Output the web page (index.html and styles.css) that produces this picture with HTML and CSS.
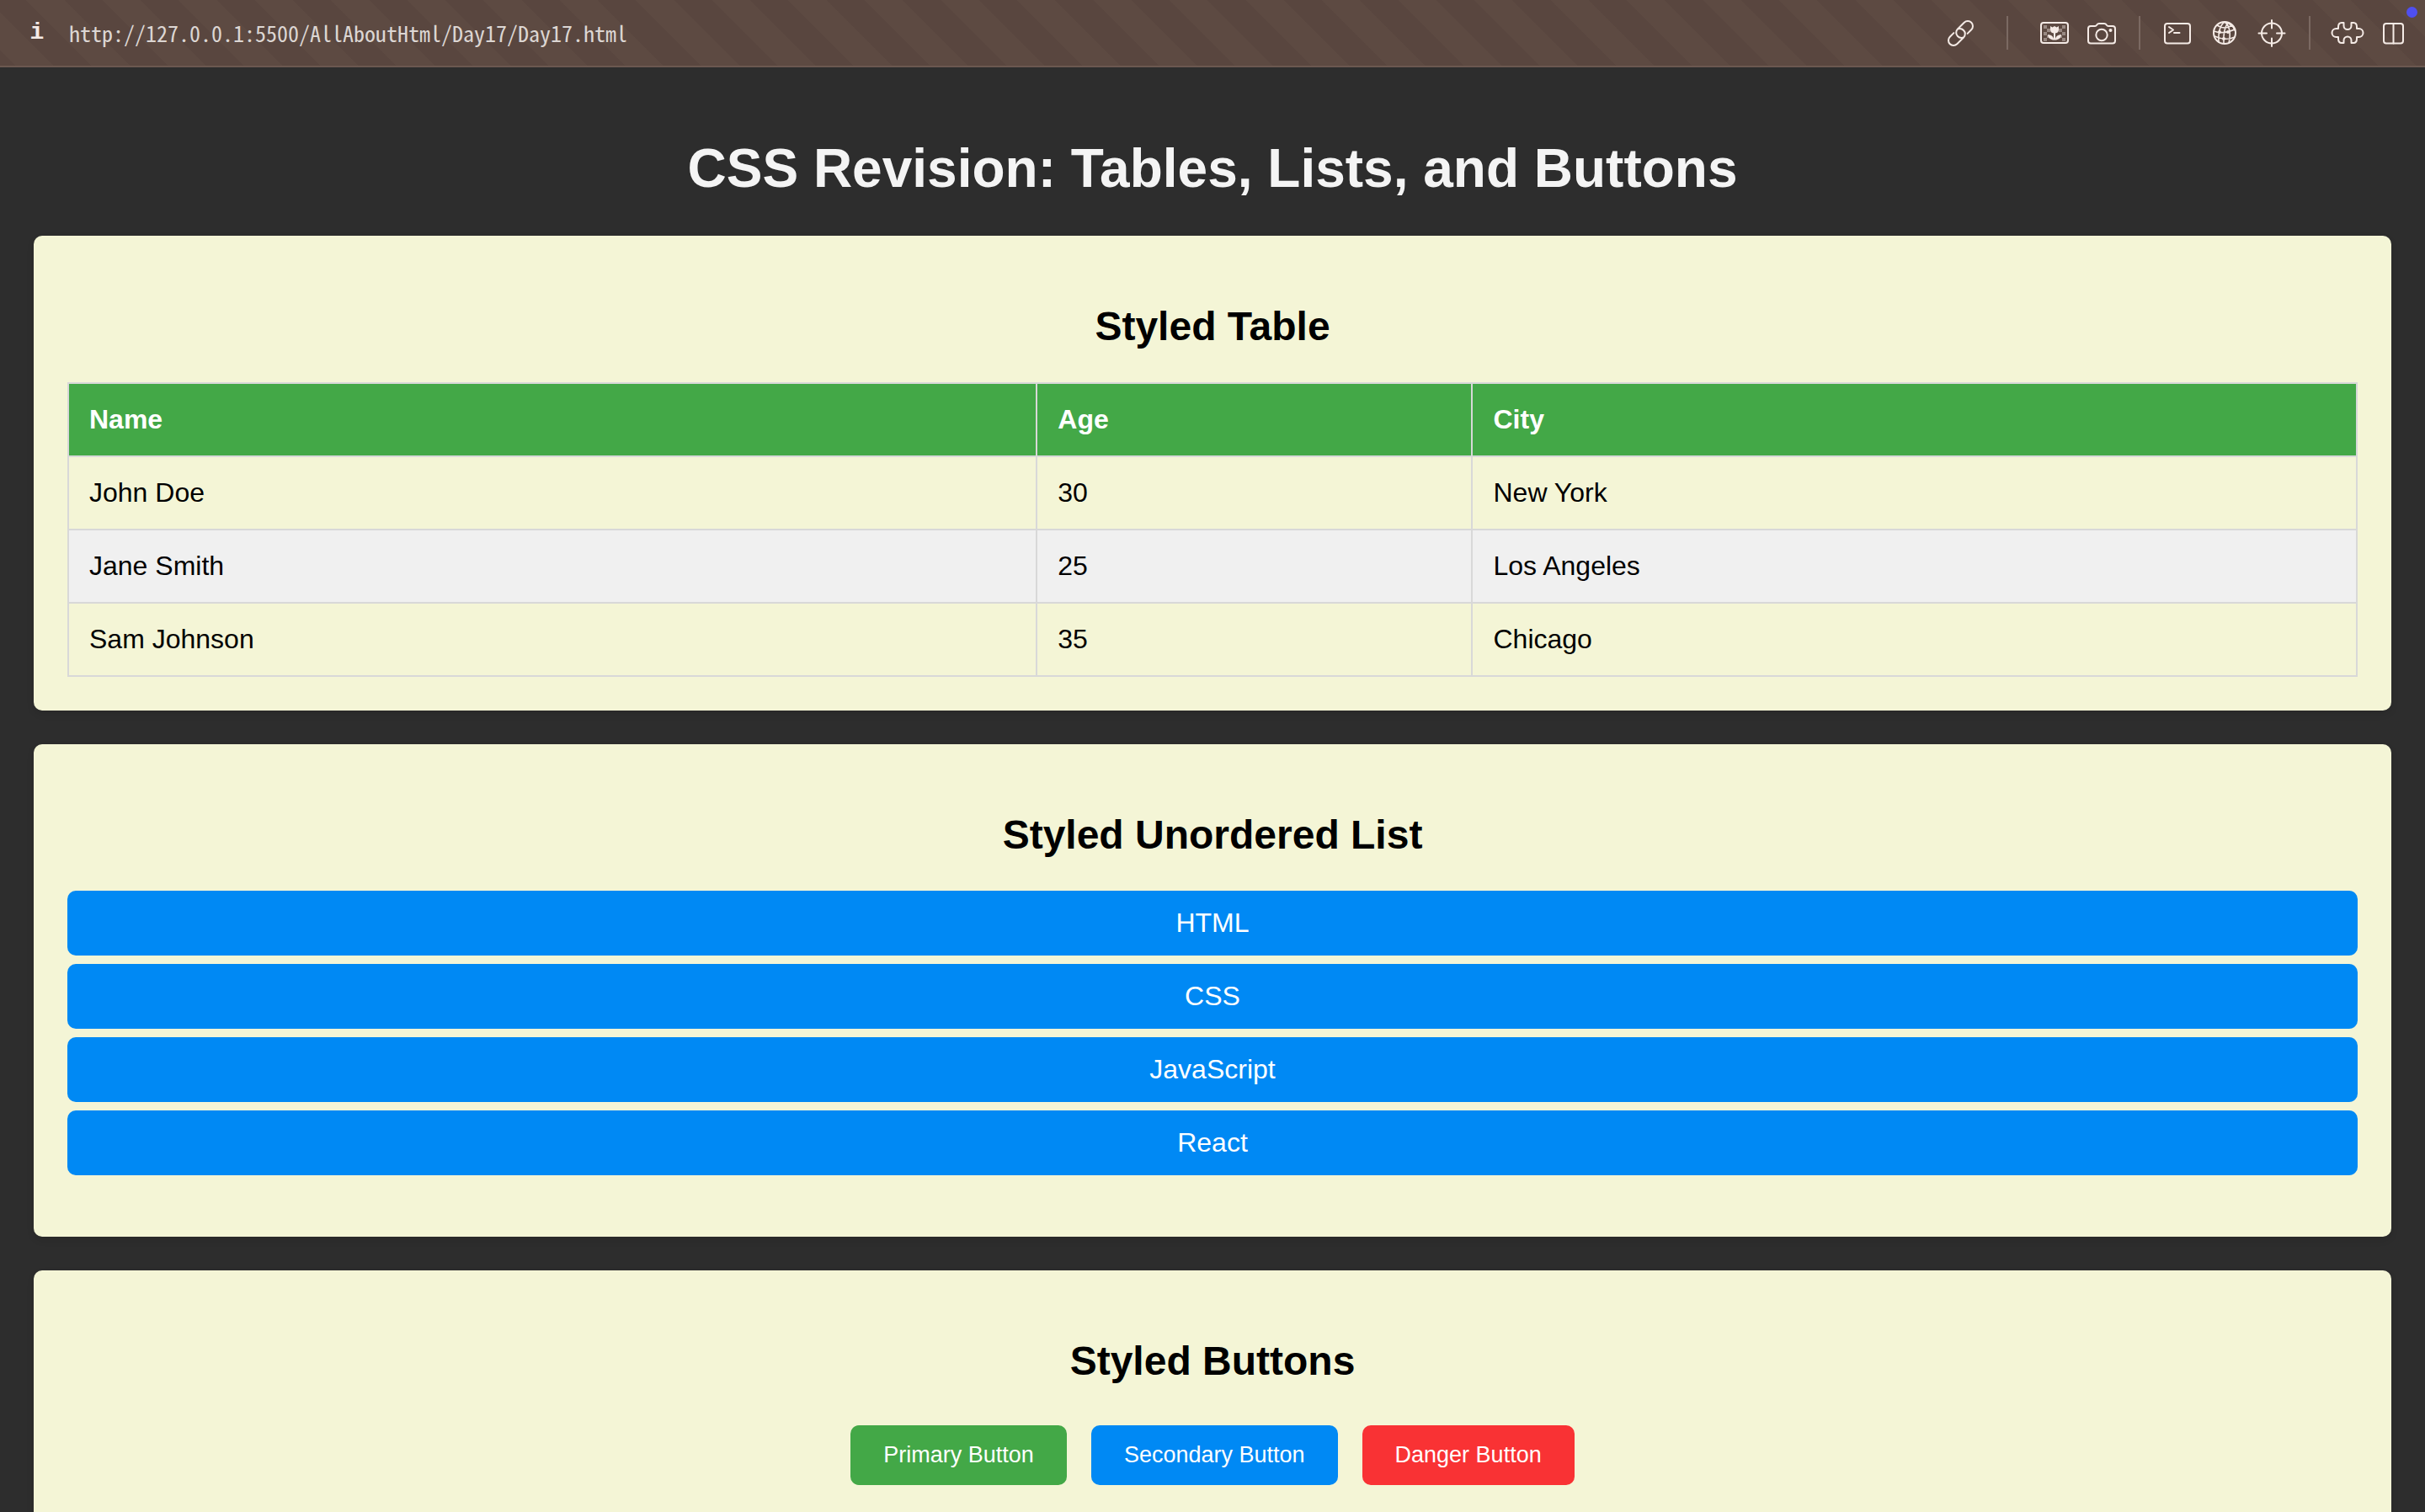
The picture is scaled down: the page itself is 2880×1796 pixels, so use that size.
FILE: index.html
```html
<!DOCTYPE html>
<html lang="en">
<head>
<meta charset="utf-8">
<title>CSS Revision</title>
<link rel="stylesheet" href="styles.css">
</head>
<body>
<header class="toolbar">
  <button class="info" type="button" aria-label="Site information">i</button>
  <input class="address" type="text" aria-label="Address" value="http://127.0.0.1:5500/AllAboutHtml/Day17/Day17.html">
  <button class="tool" type="button" aria-label="Copy link">
    <svg viewBox="0 0 40 40"><g transform="translate(20.500 20.500) rotate(-45)"><path d="M5.500 6H12a6 6 0 0 0 0-12H1a6 6 0 0 0-6 6q0 3.500 3 5.500"/><path d="M-5.500-6H-12a6 6 0 0 0 0 12H-1a6 6 0 0 0 6-6q0-3.500-3-5.500"/></g></svg>
  </button>
  <span class="divider wide"></span>
  <button class="tool" type="button" aria-label="Images">
    <svg viewBox="0 0 40 40"><rect x="4" y="8" width="32" height="24" rx="3"/><g class="solid"><path opacity=".4" d="M7 11h4v4h-4zM11 15h4v4h-4zM7 19h4v4h-4zM7 26h4v4h-4zM11 23h3v3h-3zM29 11h4v4h-4zM25 15h4v4h-4zM29 19h4v4h-4zM29 26h4v4h-4zM26 23h3v3h-3z"/><path d="M15 12l2.500 1.500L20 12l2.500 1.500L25 12v4q0 4-4 4.500V27q1-4.500 7-5 0 5-6 6.500h-4Q12 27 12 22q6 .5 7 5v-6.500q-4-.5-4-4.500z"/></g></svg>
  </button>
  <button class="tool" type="button" aria-label="Capture">
    <svg viewBox="0 0 40 40"><path d="M4 15q0-3 3-3h4.500q1.500 0 2.500-1.200 1.300-1.800 3-1.800h6q1.700 0 3 1.800 1 1.200 2.500 1.200H33q3 0 3 3v14.500q0 3-3 3H7q-3 0-3-3z"/><circle cx="20" cy="22.500" r="6.700"/><circle class="solid" cx="30.500" cy="17" r="2"/></svg>
  </button>
  <span class="divider"></span>
  <button class="tool" type="button" aria-label="Console">
    <svg viewBox="0 0 40 40"><rect x="5" y="9" width="30" height="23.500" rx="3"/><path d="M10 13l5 3.500-5 3.500M16 20h6.500"/></svg>
  </button>
  <button class="tool" type="button" aria-label="Network">
    <svg viewBox="0 0 40 40"><circle cx="20" cy="20" r="13"/><path stroke-width="1.600" d="M20 7q-8 6-7 24M24 8q-6 8-5 24M20 7q9 7 5 25M20 7q10 3 12 10M11 11q9 6 18 0M7 18q12 4 25-2M8 24q13 6 24 1"/><g class="solid"><circle cx="14" cy="19" r="2"/><circle cx="24" cy="19" r="2"/><circle cx="19" cy="27" r="2"/></g></svg>
  </button>
  <button class="tool" type="button" aria-label="Inspect">
    <svg viewBox="0 0 40 40"><circle cx="20" cy="20.500" r="12"/><path d="M20 5v9.500M20 26.500v9.500M4.500 20.500h9.500M26 20.500h9.500"/></svg>
  </button>
  <span class="divider"></span>
  <button class="tool" type="button" aria-label="Extensions">
    <svg viewBox="0 0 40 40"><path d="M9 15v-2q0-5 4-5h2.500v3.500a4.500 4.500 0 0 0 9 0V8H27q4 0 4 5v2h2.500a4.500 4.500 0 0 1 0 10H31v2q0 5-4 5h-2.500v-3a4.500 4.500 0 0 0-9 0v3H13q-4 0-4-5v-2H6.500a4.500 4.500 0 0 1 0-10z"/></svg>
  </button>
  <button class="tool" type="button" aria-label="Split view">
    <svg viewBox="0 0 40 40"><rect x="7" y="9" width="23" height="23.500" rx="3"/><path d="M18.500 9v23.500"/></svg>
    <span class="dot"></span>
  </button>
</header>
<main class="page">
  <h1>CSS Revision: Tables, Lists, and Buttons</h1>
  <section class="card">
    <h2>Styled Table</h2>
    <table>
      <thead>
        <tr><th>Name</th><th>Age</th><th>City</th></tr>
      </thead>
      <tbody>
        <tr><td>John Doe</td><td>30</td><td>New York</td></tr>
        <tr><td>Jane Smith</td><td>25</td><td>Los Angeles</td></tr>
        <tr><td>Sam Johnson</td><td>35</td><td>Chicago</td></tr>
      </tbody>
    </table>
  </section>
  <section class="card">
    <h2>Styled Unordered List</h2>
    <ul>
      <li>HTML</li>
      <li>CSS</li>
      <li>JavaScript</li>
      <li>React</li>
    </ul>
  </section>
  <section class="card">
    <h2>Styled Buttons</h2>
    <div class="buttons">
      <button class="btn primary" type="button">Primary Button</button>
      <button class="btn secondary" type="button">Secondary Button</button>
      <button class="btn danger" type="button">Danger Button</button>
    </div>
  </section>
</main>
</body>
</html>
```

FILE: styles.css
```css
* {
  box-sizing: border-box;
}

body {
  margin: 0;
  height: 100vh;
  display: flex;
  flex-direction: column;
  background: #2d2d2d;
  font-family: "Liberation Sans", Arial, sans-serif;
  font-size: 32px;
  line-height: 37px;
}

/* Browser toolbar */
.toolbar {
  flex: none;
  height: 80px;
  display: flex;
  align-items: center;
  gap: 16px;
  padding: 0 16px 0 24px;
  border-bottom: 2px solid #6b5850;
  background: repeating-linear-gradient(45deg, #59463f 0 13px, #5d4a42 13px 45px, #59463f 45px 64px);
}

.info,
.tool {
  flex: none;
  width: 40px;
  height: 40px;
  padding: 0;
  border: 0;
  background: none;
  color: #f5ebe6;
}

.info {
  font: bold 28px/40px "Liberation Mono", "Courier New", monospace;
}

.address {
  flex: 1;
  min-width: 0;
  padding: 0 2px;
  border: 0;
  outline: 0;
  background: none;
  color: #dcd6d3;
  font: 26px/40px "Noto Sans Mono CJK JP", "Liberation Mono", monospace;
}

.tool {
  position: relative;
}

.tool svg {
  display: block;
  overflow: visible;
  fill: none;
  stroke: currentColor;
  stroke-width: 2;
  stroke-linecap: round;
  stroke-linejoin: round;
}

.tool .solid {
  fill: currentColor;
  stroke: none;
}

.divider {
  flex: none;
  width: 2px;
  height: 40px;
  margin: 0 8px;
  background: #7b6962;
}

.divider.wide {
  margin: 0 19px;
}

.dot {
  position: absolute;
  top: -11px;
  right: -7px;
  width: 13px;
  height: 13px;
  border-radius: 50%;
  background: #4f4ff0;
}

/* Document */
.page {
  flex: 1;
  min-height: 0;
  overflow-y: auto;
  scrollbar-width: none;
  padding: 40px;
}

h1 {
  margin: 43px 0;
  color: #f4f4f4;
  font-size: 64px;
  line-height: 74px;
  text-align: center;
}

.card {
  margin-bottom: 40px;
  padding: 40px;
  border-radius: 10px;
  background: #f4f5d6;
  box-shadow: 0 4px 8px rgba(0, 0, 0, 0.1);
}

h2 {
  margin: 41px 0 39px;
  font-size: 48px;
  line-height: 54px;
  text-align: center;
}

table {
  width: 100%;
  border-collapse: collapse;
}

th,
td {
  padding: 24px;
  border: 2px solid #d8d8d8;
  text-align: left;
}

th {
  background: #43a847;
  color: #fff;
}

tbody tr:nth-child(even) {
  background: #f0f0f0;
}

ul {
  display: flex;
  flex-direction: column;
  gap: 10px;
  margin: 0 0 33px;
  padding: 0;
  list-style: none;
}

li {
  padding: 20px;
  border-radius: 10px;
  background: #0089f4;
  color: #fff;
  text-align: center;
}

.buttons {
  display: flex;
  justify-content: center;
  gap: 29px;
  padding: 10px 0;
}

.btn {
  padding: 20px 39px;
  border: 0;
  border-radius: 10px;
  color: #fff;
  font: 27px/31px "Liberation Sans", Arial, sans-serif;
}

.primary {
  background: #43a847;
}

.secondary {
  background: #0089f4;
}

.danger {
  background: #f93234;
}
```
